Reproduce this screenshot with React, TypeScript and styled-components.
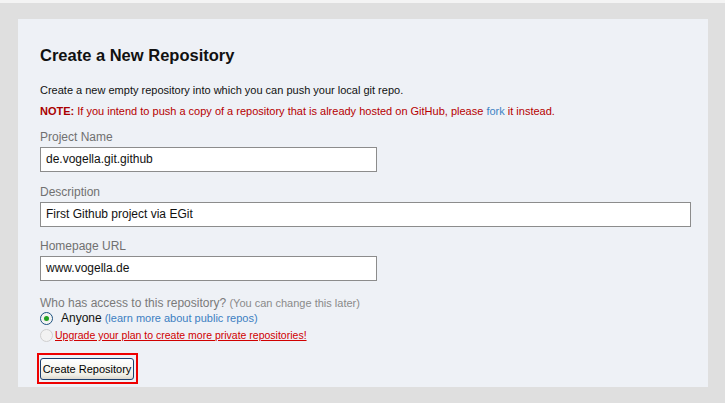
import React from "react";
import styled, { createGlobalStyle } from "styled-components";

const Global = createGlobalStyle`
  html, body { margin: 0; padding: 0; }
  body {
    background: #dfdfdf;
    border-top: 3px solid #f4f4f4;
    font-family: "Liberation Sans", Arial, sans-serif;
    width: 725px;
    height: 400px;
    overflow: hidden;
  }
`;

const Page = styled.div`
  padding: 16px 17px 16px 18px;
`;

const Panel = styled.div`
  background: #eef1f6;
  height: 368px;
  box-sizing: border-box;
  padding: 26px 22px 0 22px;
  display: flex;
  flex-direction: column;
`;

const Title = styled.h1`
  margin: 0 0 18px 0;
  font-size: 16.5px;
  line-height: 20px;
  font-weight: bold;
  color: #111;
`;

const Intro = styled.p`
  margin: 0;
  font-size: 11px;
  line-height: 14px;
  color: #111;
`;

const Note = styled.p`
  margin: 7px 0 0 0;
  font-size: 11px;
  line-height: 14px;
  color: #b60000;
  b { font-weight: bold; color: #a00; }
`;

const BlueLink = styled.a`
  color: #4183c4;
  text-decoration: none;
`;

const Field = styled.div<{ $top: number }>`
  display: flex;
  flex-direction: column;
  margin-top: ${(p) => p.$top}px;
`;

const Label = styled.label`
  font-size: 12px;
  line-height: 14px;
  color: #707070;
  margin-bottom: 3px;
`;

const Input = styled.div<{ $w: number }>`
  box-sizing: border-box;
  width: ${(p) => p.$w}px;
  height: 25px;
  background: #fff;
  border: 1px solid #8c8c8c;
  padding: 0 0 0 5px;
  font-size: 12px;
  line-height: 23px;
  color: #111;
`;

const Question = styled.div`
  margin-top: 14px;
  font-size: 12px;
  line-height: 16px;
  color: #7a7a7a;
  span { font-size: 11px; color: #8a8a8a; }
`;

const RadioRow = styled.div<{ $top: number }>`
  display: flex;
  align-items: center;
  height: 16px;
  margin-top: ${(p) => p.$top}px;
`;

const Radio = styled.span<{ $on?: boolean }>`
  box-sizing: border-box;
  width: 13px;
  height: 13px;
  border-radius: 50%;
  border: 1px solid ${(p) => (p.$on ? "#1c5180" : "#cfcfcf")};
  background: ${(p) => (p.$on ? "radial-gradient(circle, #e6e6e0 0%, #fff 100%)" : "#f2f2f2")};
  display: flex;
  align-items: center;
  justify-content: center;
  &::after {
    content: "";
    display: ${(p) => (p.$on ? "block" : "none")};
    width: 5px;
    height: 5px;
    border-radius: 50%;
    background: #21a121;
  }
`;

const Anyone = styled.span`
  margin-left: 8px;
  font-size: 12px;
  color: #111;
`;

const Small = styled.span`
  margin-left: 3px;
  font-size: 11px;
  color: #3c7fc2;
`;

const Upgrade = styled.a`
  margin-left: 2px;
  font-size: 10.5px;
  color: #d00000;
  text-decoration: underline;
`;

const ButtonFrame = styled.div`
  margin-top: 10px;
  align-self: flex-start;
  margin-left: -3px;
  border: 2px solid #ee0000;
  padding: 3px 2px 2px 1px;
`;

const Button = styled.button`
  box-sizing: border-box;
  width: 94px;
  height: 22px;
  border: 1px solid #1c3f6e;
  border-radius: 3px;
  background: linear-gradient(#ffffff, #f0efe7 80%, #dcd9cf);
  font-family: "Liberation Sans", Arial, sans-serif;
  font-size: 11px;
  white-space: nowrap;
  color: #000;
  padding: 0;
`;

export default function App() {
  return (
    <>
      <Global />
      <Page>
        <Panel>
          <Title>Create a New Repository</Title>
          <Intro>Create a new empty repository into which you can push your local git repo.</Intro>
          <Note>
            <b>NOTE:</b> If you intend to push a copy of a repository that is already hosted on GitHub, please{" "}
            <BlueLink>fork</BlueLink> it instead.
          </Note>
          <Field $top={12}>
            <Label>Project Name</Label>
            <Input $w={337}>de.vogella.git.github</Input>
          </Field>
          <Field $top={13}>
            <Label>Description</Label>
            <Input $w={651}>First Github project via EGit</Input>
          </Field>
          <Field $top={12}>
            <Label>Homepage URL</Label>
            <Input $w={337}>www.vogella.de</Input>
          </Field>
          <Question>
            Who has access to this repository? <span>(You can change this later)</span>
          </Question>
          <RadioRow $top={-1}>
            <Radio $on />
            <Anyone>Anyone</Anyone>
            <Small>(learn more about public repos)</Small>
          </RadioRow>
          <RadioRow $top={1}>
            <Radio />
            <Upgrade>Upgrade your plan to create more private repositories!</Upgrade>
          </RadioRow>
          <ButtonFrame>
            <Button>Create Repository</Button>
          </ButtonFrame>
        </Panel>
      </Page>
    </>
  );
}
